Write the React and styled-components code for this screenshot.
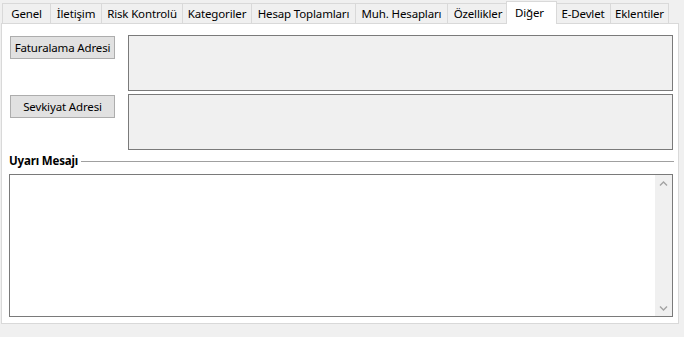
import React from 'react'
import styled, { createGlobalStyle } from 'styled-components'

const GlobalStyle = createGlobalStyle`
  html, body {
    margin: 0;
    padding: 0;
    background: #f0f0f0;
  }
  body {
    font-family: 'Noto Sans', 'Open Sans', sans-serif;
    font-size: 11.5px;
    letter-spacing: -0.15px;
    color: #000;
  }
`

const Window = styled.div`
  width: 684px;
  height: 337px;
  background: #f0f0f0;
  overflow: hidden;
`

const TabStrip = styled.div`
  display: flex;
  align-items: flex-end;
  height: 23px;
  padding-left: 2px;
  position: relative;
  z-index: 1;
`

const Tab = styled.div`
  box-sizing: border-box;
  width: ${(p) => (p.$active ? p.$w + 3 : p.$w)}px;
  height: ${(p) => (p.$active ? 23 : 20)}px;
  margin: ${(p) => (p.$active ? '0 -2px -1px -2px' : '0')};
  padding-top: ${(p) => (p.$active ? 2 : 1)}px;
  padding-right: ${(p) => (p.$active ? 4 : 0)}px;
  display: flex;
  justify-content: center;
  align-items: flex-start;
  line-height: 17px;
  white-space: nowrap;
  background: ${(p) => (p.$active ? '#ffffff' : '#f0f0f0')};
  border: 1px solid #d9d9d9;
  border-bottom: none;
  border-right: ${(p) => (p.$active || p.$last ? '1px solid #d9d9d9' : 'none')};
  position: relative;
  z-index: ${(p) => (p.$active ? 2 : 1)};
`

const Panel = styled.div`
  box-sizing: border-box;
  width: 678px;
  height: 301px;
  margin-left: 1px;
  background: #ffffff;
  border: 1px solid #d9d9d9;
  padding: 11px 0 6px 8px;
  display: flex;
  flex-direction: column;
`

const AddressGrid = styled.div`
  display: grid;
  grid-template-columns: 105px 545px;
  column-gap: 13px;
  row-gap: 3px;
`

const PushButton = styled.div`
  box-sizing: border-box;
  height: 23px;
  margin-top: 1px;
  display: flex;
  align-items: center;
  justify-content: center;
  background: #e1e1e1;
  border: 1px solid #adadad;
  white-space: nowrap;
`

const AddressBox = styled.div`
  box-sizing: border-box;
  height: 56px;
  background: #f0f0f0;
  border: 1px solid #7a7a7a;
`

const GroupHeader = styled.div`
  display: flex;
  align-items: center;
  gap: 3px;
  height: 14px;
  margin: 4px 0 0 -1px;
  width: 665px;
`

const GroupTitle = styled.span`
  font-weight: bold;
  line-height: 14px;
  white-space: nowrap;
`

const GroupRule = styled.div`
  flex: 1;
  height: 1px;
  background: #a0a0a0;
`

const MemoBox = styled.div`
  box-sizing: border-box;
  width: 664px;
  height: 143px;
  margin: 6px 0 0 -1px;
  background: #ffffff;
  border: 1px solid #7a7a7a;
  display: flex;
  justify-content: flex-end;
`

const ScrollTrack = styled.div`
  width: 17px;
  background: #f0f0f0;
  display: flex;
  flex-direction: column;
  justify-content: space-between;
`

const ScrollArrow = styled.div`
  height: 17px;
  display: flex;
  align-items: center;
  justify-content: center;
`

const Chevron = ({ down }) => (
  <svg width="9" height="6" viewBox="0 0 9 6">
    <path
      d={down ? 'M1 1.5 L4.5 5 L8 1.5' : 'M1 4.5 L4.5 1 L8 4.5'}
      fill="none"
      stroke="#a3a3a3"
      strokeWidth="1.4"
    />
  </svg>
)

const tabs = [
  { label: 'Genel', w: 48 },
  { label: 'İletişim', w: 51 },
  { label: 'Risk Kontrolü', w: 81 },
  { label: 'Kategoriler', w: 69 },
  { label: 'Hesap Toplamları', w: 104 },
  { label: 'Muh. Hesapları', w: 92 },
  { label: 'Özellikler', w: 61 },
  { label: 'Diğer', w: 48 },
  { label: 'E-Devlet', w: 55 },
  { label: 'Eklentiler', w: 59 },
]

const App = () => {
  const active = 'Diğer'

  return (
    <Window>
      <GlobalStyle />
      <TabStrip>
        {tabs.map((t, i) => (
          <Tab
            key={t.label}
            $w={t.w}
            $active={t.label === active}
            $last={i === tabs.length - 1}
          >
            {t.label}
          </Tab>
        ))}
      </TabStrip>
      <Panel>
        <AddressGrid>
          <PushButton>Faturalama Adresi</PushButton>
          <AddressBox />
          <PushButton>Sevkiyat Adresi</PushButton>
          <AddressBox />
        </AddressGrid>
        <GroupHeader>
          <GroupTitle>Uyarı Mesajı</GroupTitle>
          <GroupRule />
        </GroupHeader>
        <MemoBox>
          <ScrollTrack>
            <ScrollArrow>
              <Chevron />
            </ScrollArrow>
            <ScrollArrow>
              <Chevron down />
            </ScrollArrow>
          </ScrollTrack>
        </MemoBox>
      </Panel>
    </Window>
  )
}

export default App
